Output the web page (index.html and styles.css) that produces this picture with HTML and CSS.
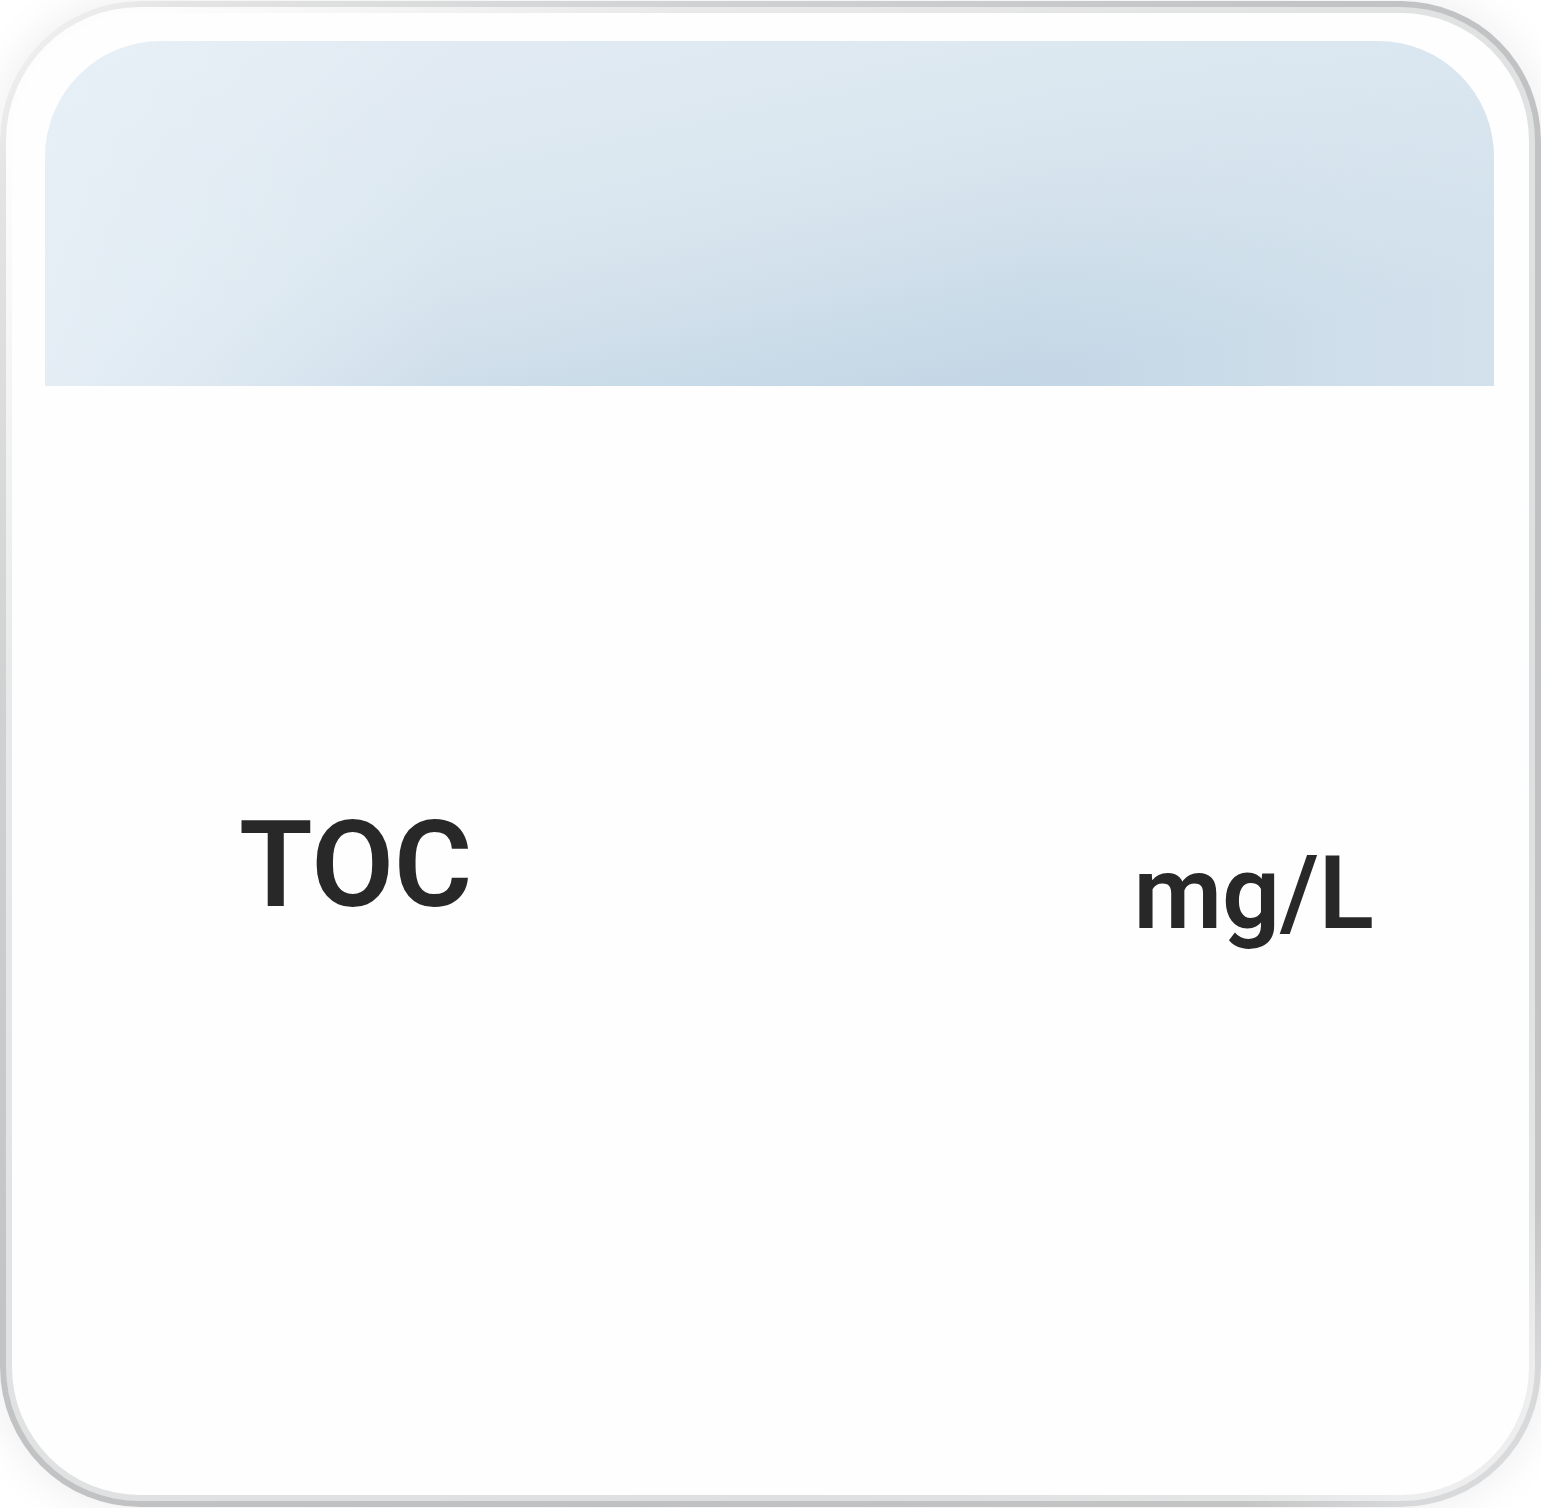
FILE: index.html
```html
<!DOCTYPE html>
<html lang="en">
<head>
<meta charset="utf-8">
<title>TOC</title>
<link rel="stylesheet" href="styles.css">
</head>
<body>
<article class="card">
  <div class="card-rim">
    <div class="card-face">
      <header class="card-banner"></header>
      <main class="reading">
        <h1 class="reading-name">TOC</h1>
        <span class="reading-unit">mg/L</span>
      </main>
    </div>
  </div>
</article>
</body>
</html>
```
FILE: styles.css
```css
* {
  box-sizing: border-box;
}

body {
  margin: 0;
  padding: 1px 0;
  min-height: 100vh;
  display: flex;
  background: #fff;
  color: #282828;
  font-family: Roboto, "Noto Sans", sans-serif;
  overflow: hidden;
}

.card {
  flex: 1;
  display: flex;
  padding: 6px;
  border-radius: 140px;
  background: linear-gradient(135deg, #f0f0f0 2%, #e4e4e4 6%, #cfd1d2 23%, #c2c3c5 44%, #bfc0c2 70%, #c4c4c5 90%, #d6d7d9 95%, #dddee0 100%);
  box-shadow: 0 0 48px rgba(0, 0, 0, 0.08);
}

.card-rim {
  flex: 1;
  display: flex;
  padding: 6px;
  border-radius: 134px;
  background: linear-gradient(135deg, #fdfdfd 5%, #e9e9e9 22%, #e1e2e2 44%, #dedfe0 75%, #e4e6e6 90%, #eeeeee 96%);
}

.card-face {
  flex: 1;
  display: flex;
  flex-direction: column;
  padding: 28px 35px 28px 33px;
  border-radius: 128px;
  background: #fefefe;
}

.card-banner {
  height: 345px;
  border-radius: 116px 116px 0 0;
  background:
    linear-gradient(90deg, #e8f0f7cc 0%, #e4edf400 28%),
    linear-gradient(270deg, #dce8f199 0%, #dce8f177 10%, #dce8f100 32%),
    linear-gradient(168deg, #e5edf5 0%, #dfe9f1 24%, #dce8f0 36%, #d9e6ef 46%, #d3e1ec 58%, #c9dbe8 73%, #c3d6e5 84%, #c3d6e5 100%);
}

.reading {
  flex: 1;
  display: flex;
  align-items: flex-start;
  justify-content: space-between;
  padding: 415px 120px 0 194px;
}

.reading-name {
  margin: 0;
  font-size: 120px;
  font-weight: 600;
  line-height: 128px;
}

.reading-unit {
  padding-top: 40px;
  font-size: 102px;
  font-weight: 600;
  line-height: 104px;
}
```
